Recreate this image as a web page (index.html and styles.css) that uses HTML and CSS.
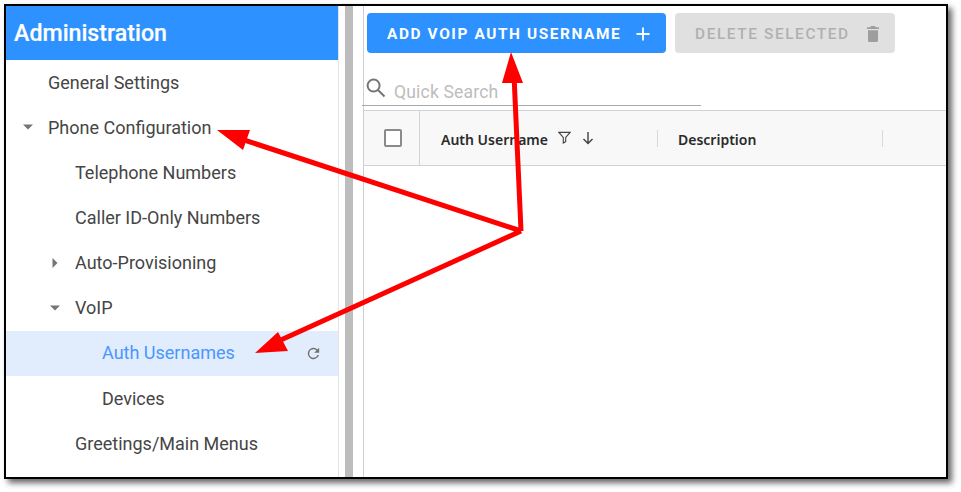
FILE: index.html
```html
<!DOCTYPE html>
<html lang="en">
<head>
<meta charset="utf-8">
<title>Auth Usernames</title>
<link rel="stylesheet" href="styles.css">
</head>
<body>
<div class="frame">
  <aside class="sidebar">
    <h1 class="side-title">Administration</h1>
    <nav class="tree">
      <div class="row lvl0">General Settings</div>
      <div class="row lvl0"><svg class="caret" viewBox="0 0 12 12"><path d="M1 3.5h10L6 8.5z"/></svg>Phone Configuration</div>
      <div class="row lvl1">Telephone Numbers</div>
      <div class="row lvl1">Caller ID-Only Numbers</div>
      <div class="row lvl1"><svg class="caret" viewBox="0 0 12 12"><path d="M3.5 1v10L8.5 6z"/></svg>Auto-Provisioning</div>
      <div class="row lvl1"><svg class="caret" viewBox="0 0 12 12"><path d="M1 3.5h10L6 8.5z"/></svg>VoIP</div>
      <div class="row lvl2 active">Auth Usernames
        <svg class="refresh" viewBox="0 0 24 24"><path d="M17.65 6.35A8 8 0 1 0 19.73 14h-2.08A6 6 0 1 1 12 6c1.66 0 3.14.69 4.22 1.78L13 11h7V4z"/></svg>
      </div>
      <div class="row lvl2">Devices</div>
      <div class="row lvl1">Greetings/Main Menus</div>
    </nav>
  </aside>
  <div class="gutter"><div class="grip"></div></div>
  <main class="main">
    <div class="toolbar">
      <button class="btn btn-add">ADD VOIP AUTH USERNAME
        <svg class="btn-icon" viewBox="0 0 14 14"><path d="M7 0.5v13M0.5 7h13"/></svg>
      </button>
      <button class="btn btn-del">DELETE SELECTED
        <svg class="trash" viewBox="0 0 12 16"><path d="M4 0h4l.7 1.2H12v1.8H0V1.2h3.3zM1 4.2h10V14.5a1.5 1.5 0 0 1-1.5 1.5h-7A1.5 1.5 0 0 1 1 14.5z"/></svg>
      </button>
    </div>
    <div class="search">
      <svg class="search-icon" viewBox="0 0 20 20"><circle cx="7.6" cy="7.6" r="6"/><path d="M12 12l6.5 6.5"/></svg>
      <span class="placeholder">Quick Search</span>
    </div>
    <div class="thead">
      <div class="th-check"><span class="checkbox"></span></div>
      <div class="th th-user">Auth Username
        <svg class="filter" viewBox="0 0 14 14"><path d="M1 1.5h12L8.3 7v4.5L5.7 13V7z"/></svg>
        <svg class="sort" viewBox="0 0 14 14"><path d="M7 1v11.5M2.5 8L7 12.5 11.5 8"/></svg>
      </div>
      <div class="th th-desc">Description</div>
    </div>
  </main>
  <svg class="arrows" viewBox="0 0 961 492">
    <path class="shaft" d="M521 231L235 137M521 231L514 75M521 231L272 344"/>
    <path class="head" d="M217 130L250 130L243 150zM511 52L502 83L523 83zM255 353L278 332L288 351z"/>
  </svg>
</div>
</body>
</html>
```
FILE: styles.css
```css
* { box-sizing: border-box; }
html, body { margin: 0; height: 100%; background: #fff; overflow: hidden; }
body { padding: 4px 0 0 4px; font-family: Roboto, "Liberation Sans", sans-serif; color: #424242; }

.frame {
  display: flex;
  width: 944px;
  height: 475px;
  border: 2px solid #000;
  background: #fff;
  box-shadow: 4px 4px 6px rgba(0, 0, 0, .6);
  overflow: hidden;
}

.sidebar { width: 333px; flex: none; border-right: 1px solid #e4e4e4; }
.side-title {
  margin: 0;
  height: 54px;
  padding: 2px 0 0 8px;
  background: #2d92ff;
  color: #fff;
  font-size: 23.2px;
  font-weight: 500;
  line-height: 50px;
  -webkit-text-stroke: .2px #fff;
}
.tree { display: flex; flex-direction: column; }
.row {
  position: relative;
  height: 45.15px;
  display: flex;
  align-items: center;
  padding-bottom: 1px;
  font-size: 18px;
  color: #454545;
}
.lvl0 { padding-left: 42px; }
.lvl1 { padding-left: 69px; }
.lvl2 { padding-left: 96px; }
.active { background: #e1edfd; color: #4a96ff; }
.caret {
  position: absolute;
  width: 12px;
  height: 12px;
  fill: #757575;
}
.lvl0 .caret { left: 16px; }
.lvl1 .caret { left: 43px; }
.refresh {
  position: absolute;
  right: 16px;
  top: 14px;
  width: 17px;
  height: 17px;
  fill: #707070;
}

.gutter { width: 24px; flex: none; padding-left: 6px; }
.grip { width: 8px; height: 100%; background: #bdbdbd; }

.main {
  flex: 1;
  min-width: 0;
  border-left: 1px solid #ccd0d5;
}
.toolbar { display: flex; gap: 9px; padding: 7px 0 0 3px; }
.btn {
  height: 40px;
  display: flex;
  align-items: center;
  border: 0;
  border-radius: 4px;
  padding: 1px 0 0 20px;
  font-family: Roboto, "Liberation Sans", sans-serif;
  font-size: 15.4px;
  font-weight: 500;
  letter-spacing: 1.6px;
}
.btn-add { width: 299px; background: #2d92ff; color: #fff; font-weight: 700; }
.btn-del { width: 220px; background: #e0e0e0; color: #b0b0b0; }
.btn-icon { width: 14px; height: 14px; margin-left: 15px; fill: none; stroke: #fff; stroke-width: 1.8; }
.trash { width: 12px; height: 16px; margin-left: 17px; fill: #9e9e9e; }

.search {
  display: flex;
  align-items: center;
  width: 339px;
  height: 35px;
  margin-top: 18px;
  margin-left: -2px;
  border-bottom: 1px solid #a8a8a8;
}
.search-icon {
  width: 20px;
  height: 20px;
  margin: 0 8px 1px 4px;
  fill: none;
  stroke: #757575;
  stroke-width: 2;
  flex: none;
}
.placeholder { font-size: 17.6px; color: #bdbdbd; letter-spacing: .15px; padding-top: 8px; }

.thead {
  display: flex;
  align-items: stretch;
  height: 56px;
  margin-top: 4px;
  background: #f8f8f8;
  border-top: 1px solid #ccd3da;
  border-bottom: 1px solid #ccd3da;
  font-family: "Noto Sans", sans-serif;
  font-size: 14px;
  font-weight: 600;
  color: #2a2a2a;
}
.th-check {
  width: 56px;
  flex: none;
  display: flex;
  align-items: center;
  padding-left: 20px;
  border-right: 1px solid #ccd3da;
}
.checkbox { width: 18px; height: 18px; border: 2px solid #8a8a8a; border-radius: 2px; background: #fff; }
.th { position: relative; display: flex; align-items: center; flex: none; padding-top: 2px; }
.th::after {
  content: "";
  position: absolute;
  right: 0;
  top: 19px;
  width: 1px;
  height: 17px;
  background: #d5d8dc;
}
.th-user { width: 238px; padding-left: 21px; }
.th-desc { width: 225px; padding-left: 20px; }
.filter { width: 13px; height: 13px; margin: 0 0 3px 10px; fill: none; stroke: #424242; stroke-width: 1.2; }
.sort { width: 14px; height: 14px; margin: 0 0 3px 10px; fill: none; stroke: #424242; stroke-width: 1.4; }

.arrows {
  position: absolute;
  left: 0;
  top: 0;
  width: 961px;
  height: 492px;
  pointer-events: none;
}
.shaft { fill: none; stroke: #ff0000; stroke-width: 5; }
.head { fill: #ff0000; }
```
